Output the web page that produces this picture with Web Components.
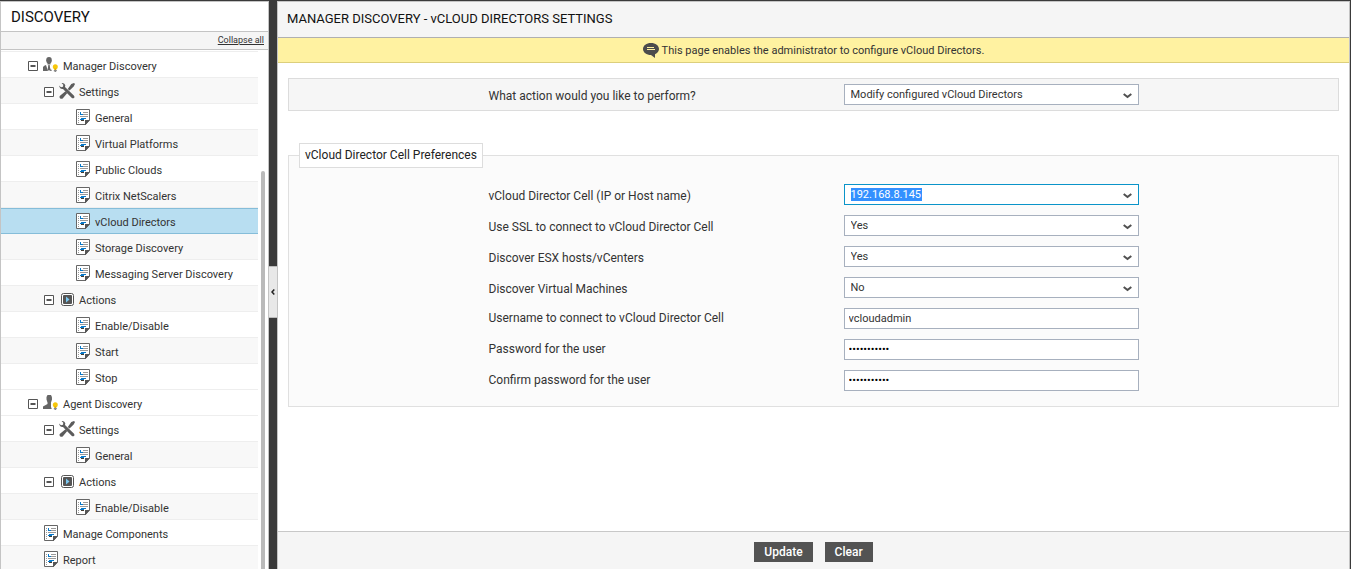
<!DOCTYPE html>
<html lang="en">
<head>
<meta charset="utf-8">
<title>Manager Discovery - vCloud Directors Settings</title>
<style>
  html, body {
    height: 100%;
    margin: 0;
  }

  body {
    background: #3a3a3a;
    color: #333;
    font-family: Roboto, "Liberation Sans", sans-serif;
    font-size: 11px;
  }
</style>
</head>
<body>

<discovery-app>
  <discovery-nav slot="nav" heading="DISCOVERY">
    <tree-item level="1" icon="manager" open>Manager Discovery</tree-item>
    <tree-item level="2" icon="tools" open shaded>Settings</tree-item>
    <tree-item level="3" icon="page">General</tree-item>
    <tree-item level="3" icon="page" shaded>Virtual Platforms</tree-item>
    <tree-item level="3" icon="page">Public Clouds</tree-item>
    <tree-item level="3" icon="page" shaded>Citrix NetScalers</tree-item>
    <tree-item level="3" icon="page" selected>vCloud Directors</tree-item>
    <tree-item level="3" icon="page" shaded>Storage Discovery</tree-item>
    <tree-item level="3" icon="page">Messaging Server Discovery</tree-item>
    <tree-item level="2" icon="play" open shaded>Actions</tree-item>
    <tree-item level="3" icon="page">Enable/Disable</tree-item>
    <tree-item level="3" icon="page" shaded>Start</tree-item>
    <tree-item level="3" icon="page">Stop</tree-item>
    <tree-item level="1" icon="agent" open>Agent Discovery</tree-item>
    <tree-item level="2" icon="tools" open>Settings</tree-item>
    <tree-item level="3" icon="page" shaded>General</tree-item>
    <tree-item level="2" icon="play" open>Actions</tree-item>
    <tree-item level="3" icon="page" shaded>Enable/Disable</tree-item>
    <tree-item level="1" icon="page">Manage Components</tree-item>
    <tree-item level="1" icon="page" shaded>Report</tree-item>
  </discovery-nav>

  <split-handle slot="handle"></split-handle>

  <settings-page heading="MANAGER DISCOVERY - vCLOUD DIRECTORS SETTINGS">
    <info-banner slot="banner">This page enables the administrator to configure vCloud Directors.</info-banner>

    <form-panel compact>
      <form-field type="select" label="What action would you like to perform?" value="Modify configured vCloud Directors"></form-field>
    </form-panel>

    <form-panel heading="vCloud Director Cell Preferences">
      <form-field type="select" label="vCloud Director Cell (IP or Host name)" value="192.168.8.145" highlighted></form-field>
      <form-field type="select" label="Use SSL to connect to vCloud Director Cell" value="Yes" options="Yes,No"></form-field>
      <form-field type="select" label="Discover ESX hosts/vCenters" value="Yes" options="Yes,No"></form-field>
      <form-field type="select" label="Discover Virtual Machines" value="No" options="Yes,No"></form-field>
      <form-field type="text" label="Username to connect to vCloud Director Cell" value="vcloudadmin"></form-field>
      <form-field type="password" label="Password for the user" value="vcloudadmin"></form-field>
      <form-field type="password" label="Confirm password for the user" value="vcloudadmin"></form-field>
    </form-panel>

    <action-button slot="actions">Update</action-button>
    <action-button slot="actions">Clear</action-button>
  </settings-page>
</discovery-app>

<script>
  const bulb = `
    <path fill="#fff" d="M9.500 6.500h5L16 9v3l-1.500 4h-5L8 12V9z"/>
    <circle cx="12.300" cy="9.800" r="2.500" fill="#f7c70a"/>
    <path fill="#d9a900" d="M11.300 11.500h2V13h-2z"/>
    <path fill="#888" d="M10.800 13h3v1.200h-.8v.8h-1.400v-.8h-.8z"/>`;

  const icons = {
    manager: `<svg width="16" height="16" viewBox="0 0 16 16" aria-hidden="true">
      <ellipse cx="6" cy="3.200" rx="2.800" ry="3.200" fill="#666"/>
      <path fill="#666" d="M4.500 5h3v2.500h-3zM3 8l2 6H0v-4q1-1.500 3-2zM9 8 7 14h5v-4q-1-1.500-3-2zM5.300 8h1.400l.6 4.500L6 14l-1.300-1.500z"/>
      ${bulb}
    </svg>`,

    agent: `<svg width="16" height="16" viewBox="0 0 16 16" aria-hidden="true">
      <path fill="#666" d="M4.500 0h3.500q1.300 1.500 1 4.500L8 7.500V9l4 2v3H0v-2.500L4.500 9V7.500L3.500 4.500Q3 1.500 4.500 0z"/>
      ${bulb}
    </svg>`,

    tools: `<svg width="16" height="16" viewBox="0 0 16 16" aria-hidden="true">
      <path fill="#5c5c5c" d="M0 2.500 2 4.200l2-.5.300-2L2.500 0Q5.500-.300 6.300 2.200L6 4l8.800 8.500q1.200 1.500.2 2.500-1.200.8-2.400-.2L4 6q-3 .500-4-3.500z"/>
      <path fill="#5c5c5c" d="M12.300 1 15 0l1 1-1.300 2.500-4.200 4.100-1.700-1.500zM6.500 8.300 8.300 10l-4.600 5.400q-1.400 1-2.700-.2-1-1.200 0-2.400z"/>
    </svg>`,

    play: `<svg width="13" height="14" viewBox="0 0 13 14" aria-hidden="true">
      <rect x=".5" y="1.500" width="12" height="12" rx="2" fill="#fff" stroke="#555"/>
      <rect x="2" y="3" width="9" height="9" rx="1" fill="#555"/>
      <path fill="#7cc8f0" d="M5 4.500 8.500 7.500 5 10.500z"/>
    </svg>`,

    page: `<svg width="14" height="16" viewBox="0 0 14 16" aria-hidden="true">
      <path fill="#fff" stroke="#666" d="M.5.5h13v10.500l-4 4.500h-9z"/>
      <path fill="#555" d="M9 11h5l-4.500 5H9z"/>
      <path fill="#999" d="M2 3h1v1H2zM2 5h1v1H2zM2 7h1v1H2zM2 9h1v1H2zM2 11h1v1H2zM2 13h1v1H2zM7 3h5v1H7zM7 5h5v1H7zM4 7h8v1H4z"/>
      <path fill="#0878c8" d="M4 3h1v2h2v1H4zM5 9h5v1H5zM4 10h4v1H4z"/>
      <path fill="#443c30" d="M5 11h3v1H5z"/>
    </svg>`
  };

  class DiscoveryApp extends HTMLElement {
    constructor() {
      super();

      this.attachShadow({mode: 'open'}).innerHTML = `
        <style>
          :host {
            display: grid;
            grid-template-columns: 269px 8px minmax(0, 1fr);
            grid-template-rows: minmax(0, 1fr);
            box-sizing: border-box;
            height: 100vh;
            padding: 1px 1px 0 0;
          }
        </style>
        <slot name="nav"></slot>
        <slot name="handle"></slot>
        <slot></slot>
      `;
    }
  }

  class DiscoveryNav extends HTMLElement {
    constructor() {
      super();

      this.attachShadow({mode: 'open'}).innerHTML = `
        <style>
          :host {
            display: flex;
            flex-direction: column;
            min-height: 0;
            border: 1px solid #c4c4c4;
            border-bottom: 0;
            background: #fff;
          }

          h2 {
            margin: 0;
            padding: 2px 10px 0;
            border-bottom: 1px solid #c4c4c4;
            color: #111;
            font-size: 15px;
            font-weight: 400;
            line-height: 27px;
          }

          .tools {
            padding: 0 4px;
            border-bottom: 1px solid #c4c4c4;
            background: #f5f5f5;
            font-size: 9px;
            line-height: 17px;
            text-align: right;
          }

          .tools a {
            color: #333;
          }

          .scroller {
            display: flex;
            flex: 1;
            gap: 3px;
            min-height: 0;
            padding-right: 3px;
            overflow: hidden;
          }

          nav {
            flex: 1;
            padding-top: 1px;
          }

          .rows {
            border-top: 1px solid #eee;
          }

          .thumb {
            flex: none;
            align-self: flex-end;
            width: 4px;
            height: calc(77% - 2px);
            border-radius: 2px 2px 0 0;
            background: #bababa;
          }
        </style>
        <h2></h2>
        <div class="tools"><a href="#">Collapse all</a></div>
        <div class="scroller">
          <nav><div class="rows"><slot></slot></div></nav>
          <div class="thumb"></div>
        </div>
      `;
    }

    connectedCallback() {
      this.shadowRoot.querySelector('h2').textContent = this.getAttribute('heading');
    }
  }

  class TreeItem extends HTMLElement {
    constructor() {
      super();

      this.attachShadow({mode: 'open'}).innerHTML = `
        <style>
          :host {
            display: flex;
            align-items: center;
            gap: 5px;
            box-sizing: border-box;
            height: 26px;
            border-top: 1px solid transparent;
            border-bottom: 1px solid #eee;
            padding-left: calc(11px + 16px * var(--level));
          }

          :host([shaded]) {
            background: #f8f8f8;
          }

          :host([selected]) {
            border-color: #85bdd9;
            background: #b8def1;
          }

          .toggle {
            display: flex;
            flex: none;
            width: 10px;
            height: 10px;
            margin: 2px 0 0;
            padding: 0;
            border: 0;
            background: none;
          }

          a {
            display: flex;
            align-items: center;
            gap: 4px;
            color: #333;
            text-decoration: none;
            line-height: 20px;
            white-space: nowrap;
          }

          .icon {
            display: flex;
            justify-content: center;
            width: 16px;
          }

          .text {
            padding-top: 4px;
          }
        </style>
        <span class="toggle"></span>
        <a href="#"><span class="icon"></span><span class="text"><slot></slot></span></a>
      `;
    }

    connectedCallback() {
      this.style.setProperty('--level', this.getAttribute('level'));
      this.shadowRoot.querySelector('.icon').innerHTML = icons[this.getAttribute('icon')];

      if(this.hasAttribute('open')) {
        const button = document.createElement('button');

        button.className = 'toggle';
        button.type = 'button';
        button.setAttribute('aria-label', `Collapse ${this.textContent}`);
        button.innerHTML = `
          <svg width="10" height="10" viewBox="0 0 10 10" aria-hidden="true">
            <path fill="#fff" stroke="#555" d="M.5.5h9v9h-9z"/>
            <path fill="#555" d="M2.500 4h5v2h-5z"/>
          </svg>`;
        this.shadowRoot.querySelector('.toggle').replaceWith(button);
      }
    }
  }

  class SplitHandle extends HTMLElement {
    constructor() {
      super();

      this.attachShadow({mode: 'open'}).innerHTML = `
        <style>
          :host {
            display: flex;
            align-items: center;
            padding-top: 14px;
          }

          button {
            display: flex;
            align-items: center;
            justify-content: center;
            width: 100%;
            height: 52px;
            padding: 0;
            border: 1px solid #bbb;
            border-width: 1px 0;
            background: #e8e8e8;
          }
        </style>
        <button type="button" aria-label="Hide navigation">
          <svg width="4" height="6" viewBox="0 0 4 6" aria-hidden="true">
            <path fill="none" stroke="#222" stroke-width="1.500" d="M3.300.5 1 3l2.300 2.500"/>
          </svg>
        </button>
      `;
    }
  }

  class SettingsPage extends HTMLElement {
    constructor() {
      super();

      this.attachShadow({mode: 'open'}).innerHTML = `
        <style>
          :host {
            display: flex;
            flex-direction: column;
            border: 1px solid #c4c4c4;
            border-bottom: 0;
            background: #fff;
          }

          h1 {
            margin: 0;
            padding: 0 9px 2px;
            border-bottom: 1px solid #b0b0b0;
            background: #f5f5f5;
            color: #111;
            font-size: 13px;
            font-weight: 400;
            line-height: 33px;
          }

          main {
            display: flex;
            flex: 1;
            flex-direction: column;
            gap: 32px;
            padding: 15px 10px;
          }

          footer {
            display: flex;
            justify-content: center;
            gap: 12px;
            padding: 10px 0 7px;
            border-top: 1px solid #c8c8c8;
            background: #f5f5f5;
          }
        </style>
        <h1></h1>
        <slot name="banner"></slot>
        <main><slot></slot></main>
        <footer><slot name="actions"></slot></footer>
      `;
    }

    connectedCallback() {
      this.shadowRoot.querySelector('h1').textContent = this.getAttribute('heading');
    }
  }

  class InfoBanner extends HTMLElement {
    constructor() {
      super();

      this.attachShadow({mode: 'open'}).innerHTML = `
        <style>
          :host {
            display: flex;
            align-items: center;
            justify-content: center;
            gap: 3px;
            border-bottom: 1px solid #dccf7c;
            background: #fff2a1;
            line-height: 22px;
          }

          span {
            padding-top: 2px;
          }
        </style>
        <svg width="16" height="15" viewBox="0 0 16 15" aria-hidden="true">
          <path fill="#4c4c4c" d="M8 0c4.500 0 8 2.600 8 6 0 2.200-1.500 4.200-4 5.200V15l-4-3c-4.500 0-8-2.600-8-6s3.500-6 8-6z"/>
          <path fill="#fff2a1" d="M4 4h7v1H4zM4 6h8v1H4z"/>
        </svg>
        <span><slot></slot></span>
      `;
    }
  }

  class FormPanel extends HTMLElement {
    constructor() {
      super();

      this.attachShadow({mode: 'open'}).innerHTML = `
        <style>
          :host {
            display: block;
          }

          fieldset {
            display: flex;
            flex-direction: column;
            align-items: center;
            gap: 10px;
            min-width: 0;
            margin: 0;
            padding: 16px 0 15px;
            border: 1px solid #e0e0e0;
            background: #fbfbfb;
          }

          legend {
            margin-left: 10px;
            padding: 0 5px;
            border: 1px solid #ddd;
            background: #fff;
            color: #222;
            font-size: 12px;
            line-height: 23px;
          }

          :host([compact]) fieldset {
            padding: 5px 0;
            border-color: #dcdcdc;
            background: #f6f6f6;
          }
        </style>
        <fieldset><slot></slot></fieldset>
      `;
    }

    connectedCallback() {
      if(this.hasAttribute('heading')) {
        const legend = document.createElement('legend');

        legend.textContent = this.getAttribute('heading');
        this.shadowRoot.querySelector('fieldset').prepend(legend);
      }
    }
  }

  class FormField extends HTMLElement {
    constructor() {
      super();

      this.attachShadow({mode: 'open'}).innerHTML = `
        <style>
          :host {
            display: grid;
            grid-template-columns: 355fr 295fr;
            width: 100%;
            max-width: 650px;
          }

          label {
            height: 21px;
            color: #333;
            font-size: 12px;
            line-height: 21px;
          }

          :host([type="select"]) label {
            line-height: 25px;
          }

          .control {
            display: grid;
            align-items: center;
          }

          input, select {
            grid-area: 1 / 1;
            box-sizing: border-box;
            width: 100%;
            height: 21px;
            margin: 0;
            padding: 0 4px;
            border: 1px solid #a7b0be;
            border-radius: 0;
            outline: 0;
            background: #fff;
            color: #333;
            font: inherit;
          }

          input[type="password"] {
            color: #000;
          }

          select {
            appearance: none;
            padding: 0 24px 0 6px;
          }

          :host([highlighted]) select {
            border-color: #0a94c9;
            background: linear-gradient(#3390ff, #3390ff) 6px 3px / 71px 13px no-repeat #fff;
            color: #fff;
          }

          svg {
            grid-area: 1 / 1;
            justify-self: end;
            margin: 2px 7px 0 0;
            pointer-events: none;
          }
        </style>
        <label for="control"></label>
        <div class="control"></div>
      `;
    }

    connectedCallback() {
      const type = this.getAttribute('type');
      const value = this.getAttribute('value');
      const control = document.createElement(type === 'select' ? 'select' : 'input');
      const holder = this.shadowRoot.querySelector('.control');

      this.shadowRoot.querySelector('label').textContent = this.getAttribute('label');
      control.id = 'control';
      holder.append(control);

      if(type === 'select') {
        const options = (this.getAttribute('options') || value).split(',');

        options.forEach(option => control.add(new Option(option, option)));
        holder.insertAdjacentHTML('beforeend', `
          <svg width="9" height="6" viewBox="0 0 9 6" aria-hidden="true">
            <path fill="none" stroke="#505050" stroke-width="2" d="M.7 1 4.500 4 8.300 1"/>
          </svg>`);
      }
      else {
        control.type = type;
      }

      control.value = value;
    }
  }

  class ActionButton extends HTMLElement {
    constructor() {
      super();

      this.attachShadow({mode: 'open'}).innerHTML = `
        <style>
          :host {
            display: block;
          }

          button {
            display: block;
            height: 20px;
            padding: 0 10px;
            border: 0;
            background: #535353;
            color: #fff;
            font: 500 12px/20px Roboto, "Liberation Sans", sans-serif;
          }
        </style>
        <button type="button"><slot></slot></button>
      `;
    }
  }

  customElements.define('discovery-app', DiscoveryApp);
  customElements.define('discovery-nav', DiscoveryNav);
  customElements.define('tree-item', TreeItem);
  customElements.define('split-handle', SplitHandle);
  customElements.define('settings-page', SettingsPage);
  customElements.define('info-banner', InfoBanner);
  customElements.define('form-panel', FormPanel);
  customElements.define('form-field', FormField);
  customElements.define('action-button', ActionButton);
</script>
</body>
</html>
